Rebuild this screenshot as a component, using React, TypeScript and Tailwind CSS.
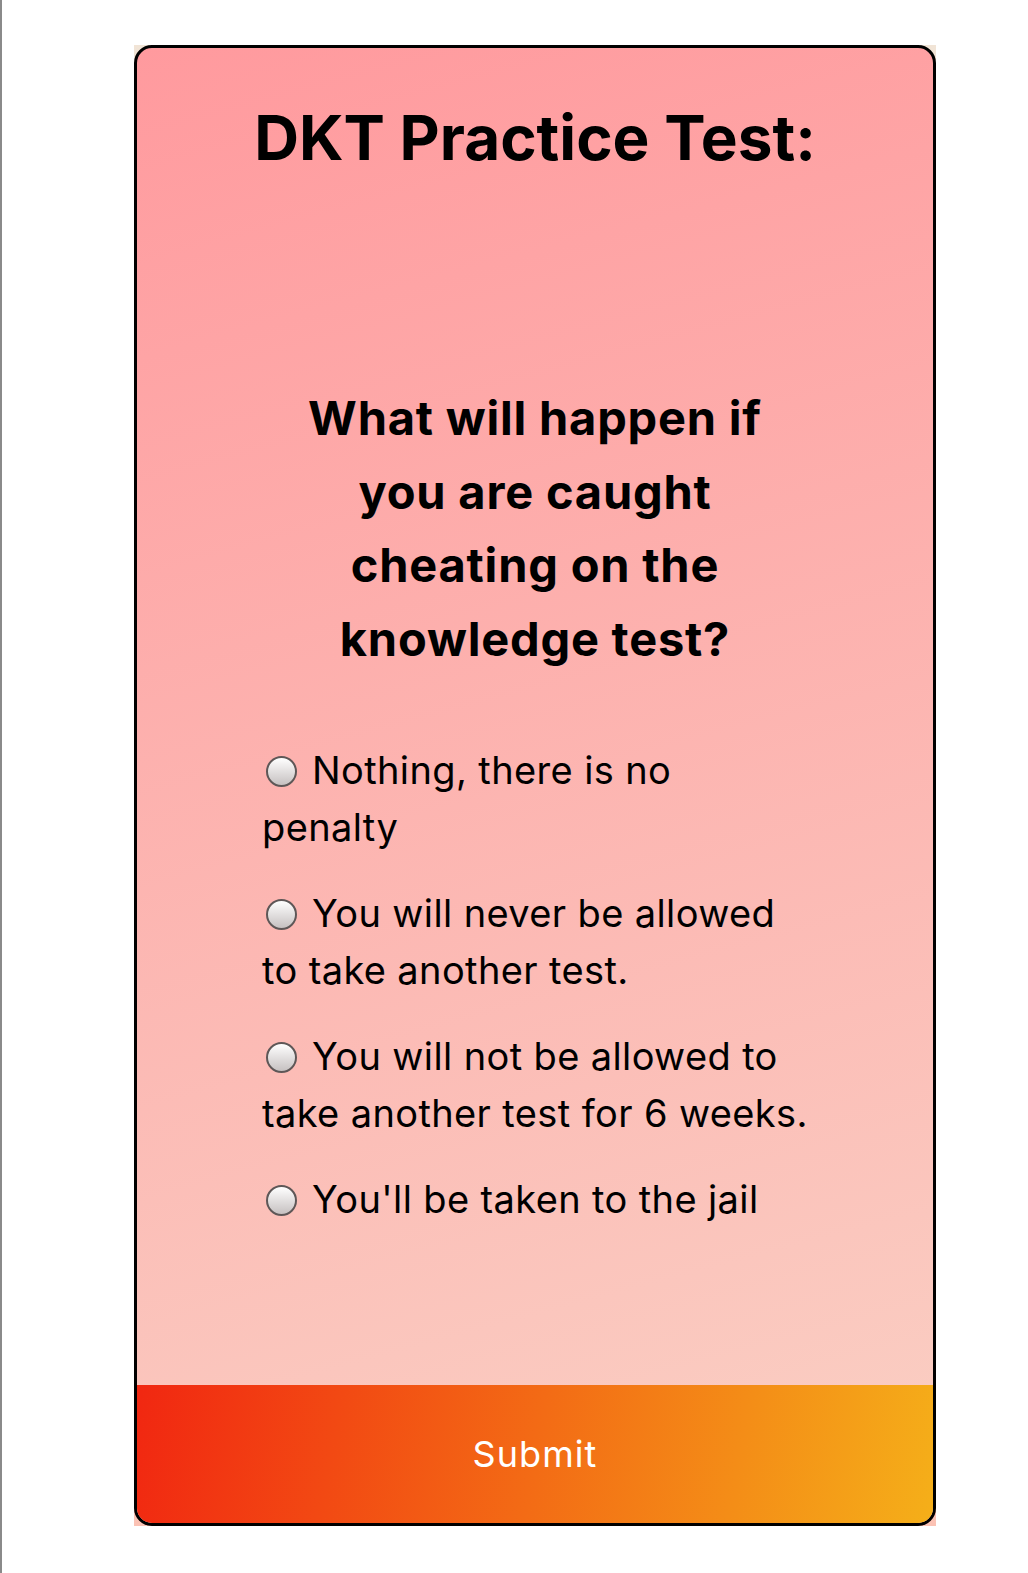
const options = [
  "Nothing, there is no penalty",
  "You will never be allowed to take another test.",
  "You will not be allowed to take another test for 6 weeks.",
  "You'll be taken to the jail",
];

export default function App() {
  return (
    <div className="min-h-screen bg-white border-l-2 border-[#8a8a8a] pt-[45px] pl-[132px] pb-[47px] font-['Inter',sans-serif] text-black">
      <div className="w-[802px] h-[1481px] bg-linear-to-b from-[#f1e4d6] to-[#fbc2b4]">
        <div className="h-full flex flex-col overflow-hidden rounded-[18px] border-[3px] border-black bg-linear-[165deg] from-[#ff9a9e] to-[#fad0c4]">
          <h1 className="pt-[53px] text-center text-[62px] leading-[1.2] font-bold">
            DKT Practice Test:
          </h1>

          <h2 className="mt-[206px] mx-auto max-w-[490px] text-center text-[47px] leading-[73.5px] font-bold tracking-[0.017em]">
            What will happen if you are caught cheating on the knowledge test?
          </h2>

          <form className="mt-[67px] ml-[125px] w-[550px] flex flex-col gap-[29px]">
            {options.map((opt) => (
              <label key={opt} className="block text-[38px] leading-[57px] tracking-[0.01em]">
                <input
                  type="radio"
                  name="answer"
                  className="appearance-none inline-block align-middle relative -top-[3px] ml-1 mr-[15px] w-[31px] h-[31px] rounded-full border-2 border-[#5e5757] bg-linear-to-b from-white to-[#c6c1c1]"
                />
                {opt}
              </label>
            ))}
          </form>

          <button
            type="button"
            className="mt-auto h-[138px] w-full bg-linear-[100deg] from-[#f12711] to-[#f5af19] text-white text-[36px] tracking-[0.03em]"
          >
            Submit
          </button>
        </div>
      </div>
    </div>
  );
}
